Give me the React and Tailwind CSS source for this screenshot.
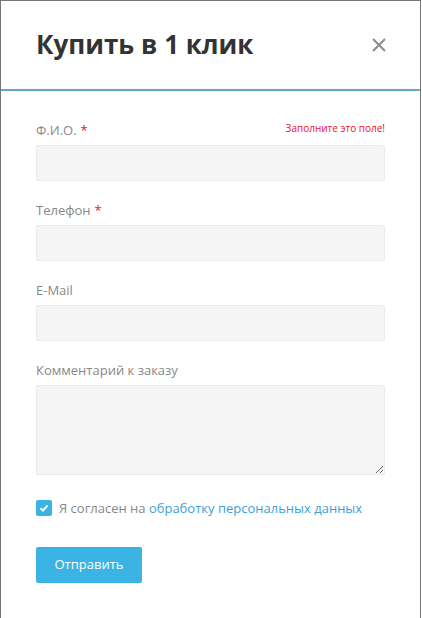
import React from "react";

const FIELDS = [
  { label: "Ф.И.О.", required: true, error: "Заполните это поле!" },
  { label: "Телефон", required: true },
  { label: "E-Mail" },
];

function Field({ label, required, error, children }) {
  return (
    <div className="mb-[19px]">
      <div className="flex items-start justify-between h-[20px] mb-[5px]">
        <label className="text-[13px] leading-[20px] text-[#888888]">
          {label}
          {required && <span className="text-[#e8112d] ml-[4px]">*</span>}
        </label>
        {error && (
          <span className="text-[10px] leading-[16px] text-[#e8112d]">
            {error}
          </span>
        )}
      </div>
      {children}
    </div>
  );
}

export default function App() {
  return (
    <div
      className="w-[421px] h-[618px] bg-white border-t border-l border-r border-[#777777] overflow-hidden"
      style={{ fontFamily: '"Open Sans", "Noto Sans", sans-serif' }}
    >
      {/* HEADER */}
      <div className="h-[90px] border-b-2 border-[#64a9c4] px-[35px] pt-[25px] flex items-start justify-between">
        <h1 className="text-[26px] leading-[36px] font-bold text-[#333333]">
          Купить в 1 клик
        </h1>
        <button className="mt-[11px] mr-[-2px] w-[16px] h-[16px] flex items-center justify-center">
          <svg width="16" height="16" viewBox="0 0 16 16">
            <path
              d="M2 2 L14 14 M14 2 L2 14"
              stroke="#8a8a8a"
              strokeWidth="2"
            />
          </svg>
        </button>
      </div>

      {/* FORM */}
      <div className="px-[35px] pt-[29px]">
        {FIELDS.map((f) => (
          <Field key={f.label} {...f}>
            <input className="block w-full h-[36px] bg-[#f5f5f5] border border-[#ebebeb] rounded-[2px] outline-none" />
          </Field>
        ))}

        <Field label="Комментарий к заказу">
          <textarea className="block w-full h-[90px] bg-[#f5f5f5] border border-[#ebebeb] rounded-[2px] outline-none" />
        </Field>

        <div className="flex items-center mt-[25px] h-[16px]">
          <span className="w-[16px] h-[16px] rounded-[2px] bg-[#3bb1e4] flex items-center justify-center">
            <svg width="10" height="10" viewBox="0 0 10 10">
              <path
                d="M1.5 5.2 L4 7.5 L8.5 2.5"
                stroke="white"
                strokeWidth="2"
                fill="none"
              />
            </svg>
          </span>
          <span className="ml-[7px] text-[13px] leading-[18px] text-[#888888]">
            Я согласен на{" "}
            <a className="text-[#3d9fd6]">обработку персональных данных</a>
          </span>
        </div>

        <button className="mt-[31px] h-[36px] w-[106px] bg-[#3bb3e4] rounded-[2px] text-white text-[13px]">
          Отправить
        </button>
      </div>
    </div>
  );
}
